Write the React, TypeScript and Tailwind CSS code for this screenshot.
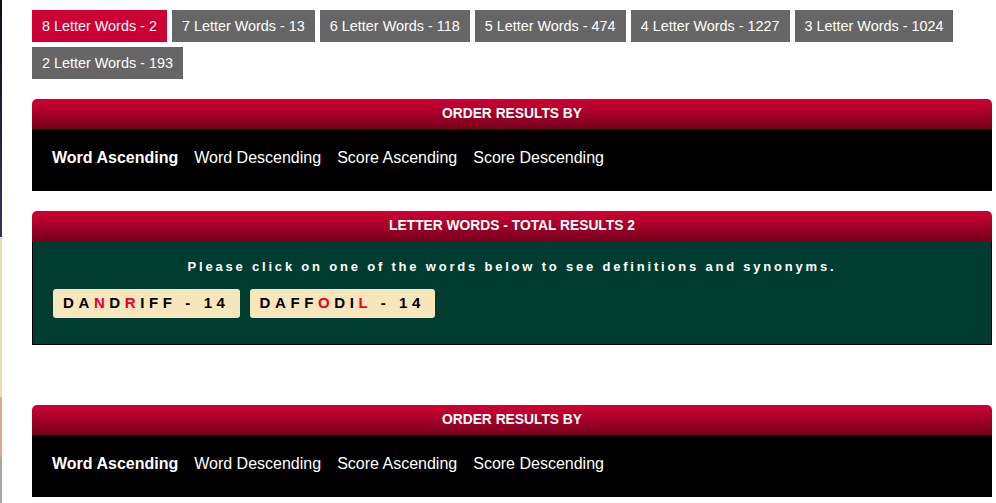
import React from 'react';

const tabs = [
  { label: '8 Letter Words - 2', active: true },
  { label: '7 Letter Words - 13' },
  { label: '6 Letter Words - 118' },
  { label: '5 Letter Words - 474' },
  { label: '4 Letter Words - 1227' },
  { label: '3 Letter Words - 1024' },
  { label: '2 Letter Words - 193' },
];

const orders = ['Word Ascending', 'Word Descending', 'Score Ascending', 'Score Descending'];

// letters drawn in red are the ones not taken from the rack
const words = [
  { word: 'DANDRIFF', red: [2, 4], score: 14 },
  { word: 'DAFFODIL', red: [4, 7], score: 14 },
];

const PanelHeader: React.FC<{ title: string }> = ({ title }) => (
  <div className="h-[30px] pt-px rounded-t-[5px] bg-gradient-to-b from-[#d10032] to-[#78001d] flex items-center justify-center text-[13.8px] font-bold text-white">
    {title}
  </div>
);

const OrderPanel: React.FC = () => (
  <div>
    <PanelHeader title="ORDER RESULTS BY" />
    <div className="h-[62px] bg-black flex items-center gap-4 pl-5 pb-1 text-[16px] text-white">
      {orders.map((o, i) => (
        <span key={o} className={i === 0 ? 'font-bold' : ''}>
          {o}
        </span>
      ))}
    </div>
  </div>
);

export default function App() {
  return (
    <div className="flex min-h-[503px] bg-white" style={{ fontFamily: '"Liberation Sans", Arial, sans-serif' }}>
      <div className="w-[2px] shrink-0 flex flex-col">
        <div className="h-[237px] bg-gradient-to-b from-[#0d0d1a] to-[#3a355e]" />
        <div className="h-[160px] bg-[#e6dcb8]" />
        <div className="h-[60px] bg-[#d8a898]" />
        <div className="flex-1 bg-[#a8a8a0]" />
      </div>
      <div className="pl-[30px] pt-[10px] w-[992px]">
        <div className="flex flex-wrap gap-[5px] w-[960px]">
          {tabs.map(t => (
            <div
              key={t.label}
              className={`h-[32px] px-[10px] pt-[2px] flex items-center text-[14.4px] text-white ${t.active ? 'bg-[#cc0033]' : 'bg-[#666666]'}`}
            >
              {t.label}
            </div>
          ))}
        </div>

        <div className="w-[960px] mt-[20px]">
          <OrderPanel />
        </div>

        <div className="w-[960px] mt-[20px]">
          <PanelHeader title="LETTER WORDS - TOTAL RESULTS 2" />
          <div className="h-[104px] bg-[#003d30] border border-black border-t-0 pt-[16px] px-5">
            <p className="text-center text-[13px] font-bold text-white tracking-[2.8px]">
              Please click on one of the words below to see definitions and synonyms.
            </p>
            <div className="flex gap-[10px] mt-[12px]">
              {words.map(w => (
                <div
                  key={w.word}
                  className="h-[29px] rounded-[3px] bg-[#f5e6bc] pl-[10px] pr-[10px] flex items-center text-[15px] font-bold tracking-[4.6px] text-black"
                >
                  <span className="whitespace-pre">
                    {w.word.split('').map((c, i) => (
                      <span key={i} className={w.red.includes(i) ? 'text-[#e8002a]' : ''}>
                        {c}
                      </span>
                    ))}
                    {` - ${w.score}`}
                  </span>
                </div>
              ))}
            </div>
          </div>
        </div>

        <div className="w-[960px] mt-[60px]">
          <OrderPanel />
        </div>
      </div>
    </div>
  );
}
